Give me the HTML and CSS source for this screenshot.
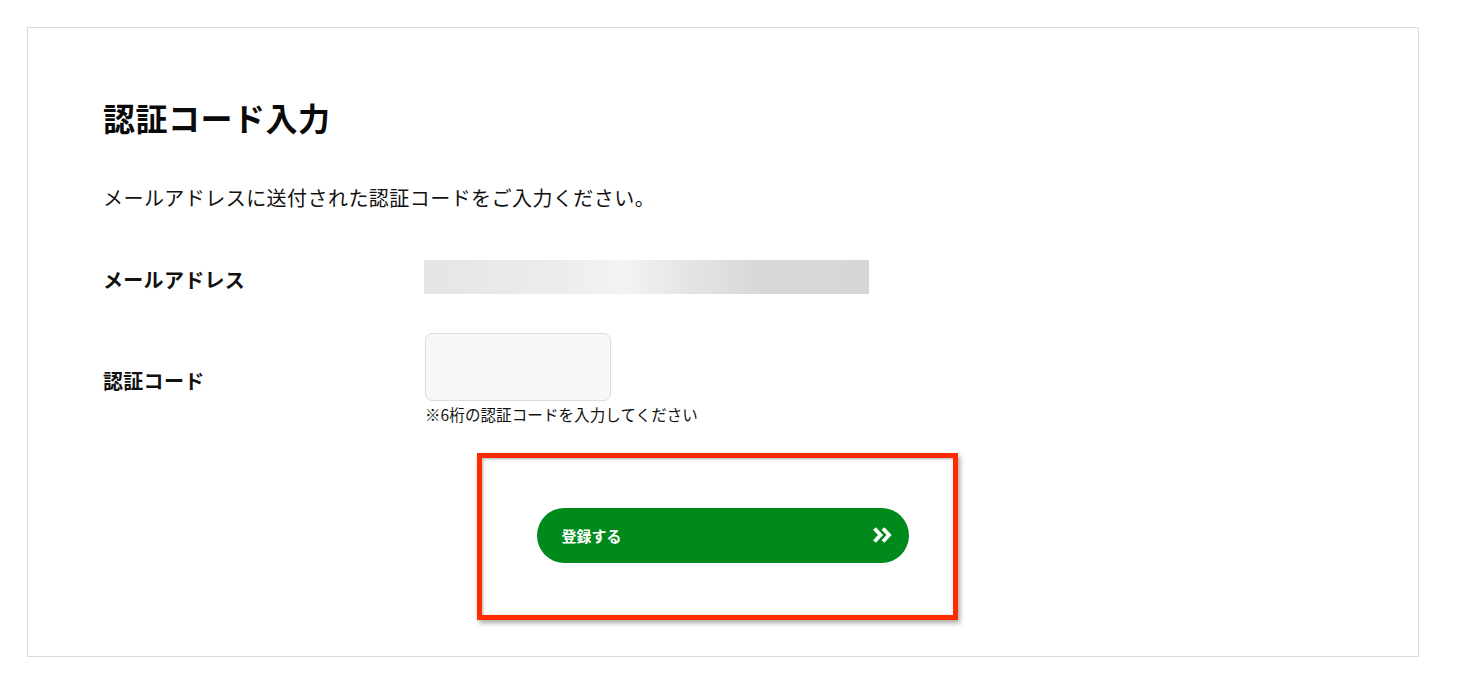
FILE: index.html
```html
<!DOCTYPE html>
<html lang="ja">
<head>
<meta charset="utf-8">
<title>認証コード入力</title>
<link rel="stylesheet" href="styles.css">
</head>
<body>
<main class="card">
  <h1 class="title">認証コード入力</h1>
  <p class="lead">メールアドレスに送付された認証コードをご入力ください。</p>
  <div class="row row-email">
    <div class="label">メールアドレス</div>
    <div class="value"><div class="masked"></div></div>
  </div>
  <div class="row row-code">
    <div class="label">認証コード</div>
    <div class="value">
      <input class="code-input" type="text" aria-label="認証コード">
      <p class="note">※6桁の認証コードを入力してください</p>
    </div>
  </div>
  <div class="actions">
    <button class="submit" type="button">
      <span>登録する</span>
      <svg class="chev" width="19" height="16" viewBox="0 0 19 16" aria-hidden="true">
        <path d="M1.5 1.5 L7.5 8 L1.5 14.5" fill="none" stroke="#fff" stroke-width="3.8" stroke-linejoin="miter"/>
        <path d="M10 1.5 L16 8 L10 14.5" fill="none" stroke="#fff" stroke-width="3.8" stroke-linejoin="miter"/>
      </svg>
    </button>
    <div class="highlight"></div>
  </div>
</main>
</body>
</html>
```
FILE: styles.css
```css
* { box-sizing: border-box; }
html, body { margin: 0; padding: 0; background: #fff; }
body {
  font-family: "Noto Sans CJK JP", "Noto Sans", sans-serif;
  color: #111;
  padding: 27px 39px 40px 27px;
}
.card {
  border: 1px solid #dcdcdc;
  width: 1392px;
  height: 630px;
  padding: 65px 75px 0 75px;
}
.title {
  margin: 0;
  font-size: 32px;
  font-weight: 700;
  line-height: 48px;
  letter-spacing: 0.5px;
  color: #0a0a0a;
}
.lead {
  margin: 42px 0 0 0;
  font-size: 20px;
  line-height: 30px;
  letter-spacing: 0.45px;
}
.row {
  display: flex;
  align-items: flex-start;
}
.row-email { margin-top: 47px; }
.row-email .label { margin-top: 5px; }
.row-code { margin-top: 38px; }
.label {
  width: 321px;
  font-size: 20px;
  font-weight: 700;
  line-height: 30px;
  letter-spacing: 0.3px;
  flex: none;
}
.row-code .label { margin-top: 33px; }
.masked {
  width: 445px;
  height: 34px;
  background: linear-gradient(90deg, #e5e5e5 0%, #ececec 30%, #f3f3f3 45%, #e4e4e4 60%, #d8d8d8 75%, #d6d6d6 100%);
}
.code-input {
  display: block;
  width: 186px;
  height: 68px;
  border: 1px solid #dddddd;
  border-radius: 7px;
  background: #f8f8f8;
  margin: 0 0 0 1px;
  font: inherit;
}
.note {
  margin: 1px 0 0 1px;
  font-size: 15.5px;
  line-height: 24px;
  letter-spacing: 0.1px;
}
.actions {
  position: relative;
  display: flex;
  justify-content: center;
  margin-top: 82px;
}
.submit {
  width: 372px;
  height: 55px;
  border: none;
  border-radius: 28px;
  background: #018a1c;
  color: #fff;
  font-family: inherit;
  font-size: 15px;
  font-weight: 700;
  display: flex;
  align-items: center;
  justify-content: space-between;
  padding: 0 17px 1px 25px;
  margin-left: -1px;
  cursor: pointer;
}
.chev { display: block; }
.highlight {
  position: absolute;
  left: 374px;
  top: -55px;
  width: 481px;
  height: 167px;
  border: 5px solid #ff2a00;
  box-shadow: 2px 3px 5px rgba(0,0,0,0.35), inset 1px 1px 3px rgba(0,0,0,0.3);
  pointer-events: none;
}
```
